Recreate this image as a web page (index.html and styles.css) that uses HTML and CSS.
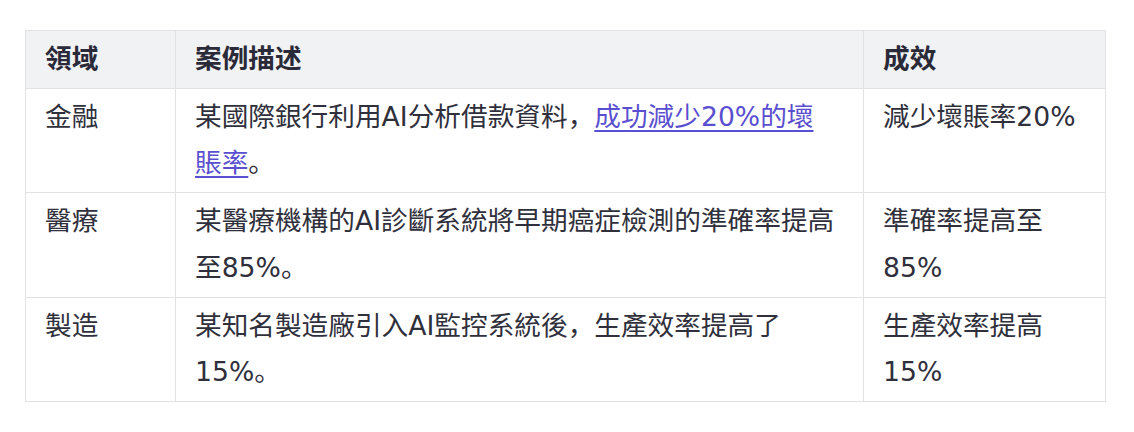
FILE: index.html
```html
<!DOCTYPE html>
<html lang="zh">
<head>
    <meta charset="UTF-8">
    <meta name="viewport" content="width=device-width, initial-scale=1.0">
    <title>AI 應用案例</title>
    <link rel="stylesheet" href="styles.css">
</head>
<body>
    <div class="wrap">
        <table class="cases">
            <colgroup>
                <col class="col-field">
                <col class="col-desc">
                <col class="col-result">
            </colgroup>
            <thead>
                <tr>
                    <th>領域</th>
                    <th>案例描述</th>
                    <th>成效</th>
                </tr>
            </thead>
            <tbody>
                <tr>
                    <td>金融</td>
                    <td>某國際銀行利用AI分析借款資料，<a href="#">成功減少20%的壞賬率</a>。</td>
                    <td>減少壞賬率20%</td>
                </tr>
                <tr>
                    <td>醫療</td>
                    <td>某醫療機構的AI診斷系統將早期癌症檢測的準確率提高至85%。</td>
                    <td>準確率提高至85%</td>
                </tr>
                <tr>
                    <td>製造</td>
                    <td>某知名製造廠引入AI監控系統後，生產效率提高了15%。</td>
                    <td>生產效率提高15%</td>
                </tr>
            </tbody>
        </table>
    </div>
</body>
</html>
```

FILE: styles.css
```css
body {
    margin: 0;
    background: #fff;
    font-family: "DejaVu Sans", "Noto Sans CJK SC", sans-serif;
    color: #30303c;
}
.wrap {
    padding: 30px 30px 0 25px;
}
.cases {
    border-collapse: collapse;
    table-layout: fixed;
    width: 1080px;
    font-size: 26.67px;
    line-height: 46.7px;
    text-spacing-trim: space-all;
}
.col-field {
    width: 150px;
}
.col-desc {
    width: 688px;
}
.col-result {
    width: 242px;
}
.cases th,
.cases td {
    border: 1px solid #e2e2e4;
    padding: 5px 25px 5px 19px;
    text-align: left;
    vertical-align: top;
}
.cases th {
    background: #f1f2f4;
    font-weight: bold;
    color: #2a2a38;
}
.cases a {
    color: #5a4fd0;
    text-decoration: underline;
    text-decoration-thickness: 2px;
    text-underline-offset: 4px;
}
```
